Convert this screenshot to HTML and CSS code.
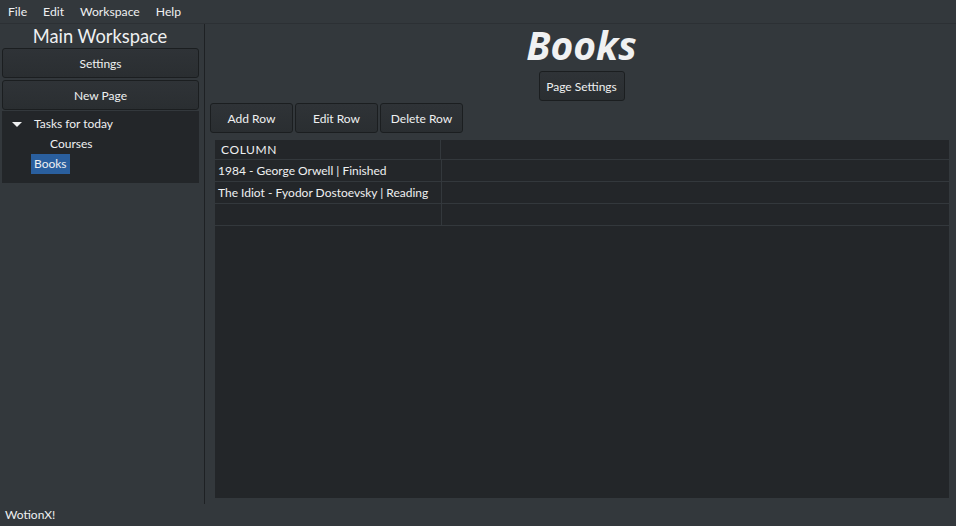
FILE: index.html
```html
<!DOCTYPE html>
<html>
<head>
<meta charset="utf-8">
<link rel="stylesheet" href="styles.css">
</head>
<body>
<div class="app">
  <nav class="menubar">
    <span class="menu-item">File</span>
    <span class="menu-item">Edit</span>
    <span class="menu-item">Workspace</span>
    <span class="menu-item">Help</span>
  </nav>
  <div class="main">
    <aside class="sidebar">
      <div class="ws-title">Main Workspace</div>
      <button class="btn btn-wide">Settings</button>
      <button class="btn btn-wide btn-last">New Page</button>
      <div class="tree">
        <div class="tree-row"><span class="arrow"></span><span class="tree-label">Tasks for today</span></div>
        <div class="tree-row child"><span class="tree-label">Courses</span></div>
        <div class="tree-row"><span class="tree-label selected">Books</span></div>
      </div>
    </aside>
    <section class="content">
      <h1 class="page-title">Books</h1>
      <div class="page-settings-row"><button class="btn btn-page">Page Settings</button></div>
      <div class="toolbar">
        <button class="btn btn-tool">Add Row</button>
        <button class="btn btn-tool">Edit Row</button>
        <button class="btn btn-tool">Delete Row</button>
      </div>
      <div class="table">
        <div class="row head"><div class="cell c1">COLUMN</div><div class="cell c2"></div></div>
        <div class="row"><div class="cell c1">1984 - George Orwell | Finished</div><div class="cell c2"></div></div>
        <div class="row"><div class="cell c1">The Idiot - Fyodor Dostoevsky | Reading</div><div class="cell c2"></div></div>
        <div class="row"><div class="cell c1"></div><div class="cell c2"></div></div>
      </div>
    </section>
  </div>
  <footer class="statusbar">WotionX!</footer>
</div>
</body>
</html>
```
FILE: styles.css
```css
* { box-sizing: border-box; }
html, body {
  margin: 0;
  padding: 0;
  width: 956px;
  height: 526px;
  overflow: hidden;
  background: #33383c;
  color: #eff0f1;
  font-family: "Lato", "Open Sans", sans-serif;
  font-size: 12px;
}
.app {
  display: flex;
  flex-direction: column;
  height: 526px;
}
.menubar {
  height: 24px;
  display: flex;
  align-items: center;
  padding-left: 0;
  border-bottom: 1px solid #2c3034;
  font-size: 12.2px;
}
.menu-item {
  padding: 0 8px;
  line-height: 22px;
}
.main {
  flex: 1;
  display: flex;
  min-height: 0;
}
.sidebar {
  width: 205px;
  padding: 0 6px 0 2px;
  border-right: 1px solid #1e2124;
  margin-bottom: 1px;
  display: flex;
  flex-direction: column;
}
.ws-title {
  text-align: center;
  font-size: 18.3px;
  line-height: 24px;
  height: 24px;
}
.btn {
  font-family: inherit;
  font-size: 12px;
  color: #eff0f1;
  background: linear-gradient(#2f3337, #2a2e31);
  border: 1px solid #1b1e20;
  border-radius: 3px;
  height: 30px;
  padding: 0;
  cursor: default;
}
.btn-wide {
  width: 197px;
  margin-bottom: 2px;
}
.btn-wide.btn-last { margin-bottom: 1px; }
.tree {
  width: 197px;
  height: 72px;
  background: #232629;
  padding-top: 3px;
}
.tree-row {
  height: 20px;
  display: flex;
  align-items: center;
  padding-left: 29px;
  position: relative;
}
.tree-row.child { padding-left: 45px; }
.arrow {
  position: absolute;
  left: 10px;
  top: 8px;
  width: 0;
  height: 0;
  border-left: 5px solid transparent;
  border-right: 5px solid transparent;
  border-top: 5px solid #eff0f1;
}
.tree-label {
  padding: 0 3px 0 3px;
  line-height: 20px;
}
.tree-label.selected {
  background: #2a5f9e;
}
.content {
  flex: 1;
  display: flex;
  flex-direction: column;
  padding: 0 7px 7px 5px;
}
.page-title {
  margin: 0;
  text-align: center;
  font-family: "Open Sans", sans-serif;
  font-style: italic;
  font-weight: 700;
  font-size: 39px;
  line-height: 41px;
  height: 46px;
  color: #f0f1f2;
  padding-left: 4px;
}
.page-settings-row {
  display: flex;
  justify-content: center;
  margin-top: 1px;
  padding-left: 4px;
}
.btn-page { width: 86px; }
.toolbar {
  display: flex;
  gap: 2px;
  margin-top: 2px;
}
.btn-tool { width: 83px; }
.table {
  flex: 1;
  margin: 7px 0 0 5px;
  background: #232629;
  display: flex;
  flex-direction: column;
}
.row {
  display: flex;
  height: 22px;
  border-bottom: 1px solid #33383c;
}
.row.head {
  height: 20px;
}
.cell {
  line-height: 21px;
  white-space: nowrap;
}
.c1 {
  width: 227px;
  border-right: 1px solid #33383c;
  padding-left: 3px;
}
.head .c1 {
  padding-left: 6px;
  letter-spacing: 0.6px;
  line-height: 19px;
  width: 226px;
}
.c2 { flex: 1; }
.statusbar {
  height: 21px;
  line-height: 20px;
  padding-left: 5px;
}
```
